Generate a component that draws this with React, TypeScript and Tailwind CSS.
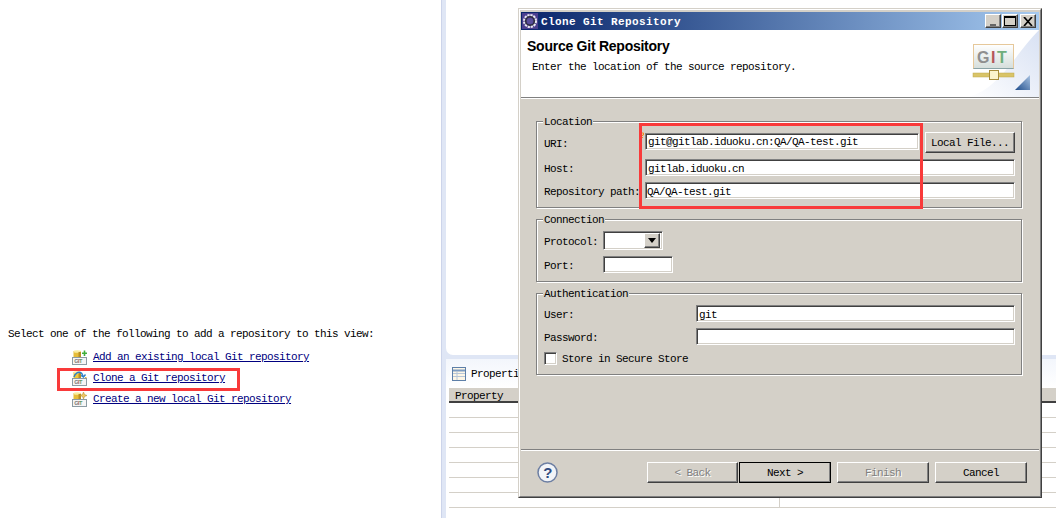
import type { ReactNode } from 'react';

const RAISED = 'border border-white border-r-[#404040] border-b-[#404040] shadow-[inset_-1px_-1px_0_#808080]';
const SUNKEN = 'border border-[#808080] border-r-white border-b-white shadow-[inset_1px_1px_0_#404040,inset_-1px_-1px_0_#d4d0c8]';

const LINKS: Array<{ variant: 'add' | 'clone' | 'create'; label: string }> = [
  { variant: 'add', label: 'Add an existing local Git repository' },
  { variant: 'clone', label: 'Clone a Git repository' },
  { variant: 'create', label: 'Create a new local Git repository' },
];

function GitIcon({ variant }: { variant: 'add' | 'clone' | 'create' }) {
  return (
    <svg width="15" height="15" viewBox="0 0 15 15" className="shrink-0">
      <rect x="1.5" y="1" width="7.5" height="6.5" fill={variant === 'clone' ? '#f0c93e' : '#e6bd3a'} />
      <ellipse cx="5.2" cy="1.5" rx="3.7" ry="1.3" fill="#f9eca0" />
      <rect x="6.5" y="2" width="2.5" height="5.5" fill="#b98f22" />
      {variant === 'add' && <path d="M10 2.5h1.7V.6h1.6v1.9H15v1.6h-1.7V6h-1.6V4.100H10z" fill="#3fae3a" />}
      {variant === 'clone' && (
        <path d="M2 6C3 2.500 6 .5 8.500 1.500 10 2 10.500 3.500 11 5M9 4.500l2.500 1.500L13.500 3.500" fill="none" stroke="#2f7fc4" strokeWidth="1.400" />
      )}
      {variant === 'clone' && <rect x="13" y="6" width="1.500" height="2" fill="#e0b83a" />}
      {variant === 'create' && <path d="M11.500 0l1 2.500L15 3.500l-2.500 1-1 2.500-1-2.500L8 3.500l2.500-1z" fill="#f0c860" stroke="#b8923a" strokeWidth=".6" />}
      <rect x=".5" y="7.500" width="14" height="7" fill="#f5f5f5" stroke="#8c9ba3" />
      <text x="2.300" y="13" fontSize="5.500" fontWeight="700" fontFamily="Liberation Sans">
        <tspan fill="#777">G</tspan>
        <tspan fill="#a86060">I</tspan>
        <tspan fill="#5d9a68">T</tspan>
      </text>
    </svg>
  );
}

function BannerArt() {
  return (
    <svg width="72" height="67" viewBox="0 0 72 67" className="shrink-0">
      <defs>
        <linearGradient id="sweep" x1="0" y1="1" x2="1" y2="0">
          <stop offset="0" stopColor="#ffffff" />
          <stop offset="1" stopColor="#d8e1f3" />
        </linearGradient>
        <linearGradient id="screen" x1="0" y1="0" x2="0" y2="1">
          <stop offset="0" stopColor="#ffffff" />
          <stop offset="1" stopColor="#d5dedb" />
        </linearGradient>
        <linearGradient id="wedge" x1="1" y1="0" x2="0" y2="1">
          <stop offset="0" stopColor="#a9c3e2" />
          <stop offset="1" stopColor="#1f4d8c" />
        </linearGradient>
      </defs>
      <path d="M0 67C32 60 48 24 72 0v67z" fill="url(#sweep)" />
      <rect x="6.500" y="14.500" width="40" height="24" fill="url(#screen)" stroke="#e6c89a" />
      <path d="M6.500 38.500h40" stroke="#8aa3a6" />
      <text x="10" y="32.500" fontSize="16" fontWeight="700" fontFamily="Liberation Sans" letterSpacing="1.500">
        <tspan fill="#8f8f8f">G</tspan>
        <tspan fill="#b5575b">I</tspan>
        <tspan fill="#6fae7c">T</tspan>
      </text>
      <rect x="6" y="43" width="41" height="4" fill="#d9c468" stroke="#bfa94e" strokeWidth=".5" />
      <rect x="22.500" y="40.500" width="9" height="9" fill="#fbf3cc" stroke="#a88d3c" />
      <path d="M63 45v15H48z" fill="url(#wedge)" />
    </svg>
  );
}

function GearIcon() {
  return (
    <svg width="16" height="16" viewBox="0 0 16 16" className="shrink-0">
      <rect width="16" height="16" fill="#4b3f8f" />
      <circle cx="8" cy="8" r="5.800" fill="none" stroke="#e8e8f0" strokeWidth="2.500" strokeDasharray="2.200 .8" />
      <circle cx="8" cy="8" r="4.300" fill="none" stroke="#2c2c3a" strokeWidth="1.500" />
      <circle cx="8" cy="8" r="3" fill="#5a4f9c" />
    </svg>
  );
}

function WindowButton({ children, className = '' }: { children: ReactNode; className?: string }) {
  return <div className={`flex h-[14px] w-[16px] items-center justify-center bg-[#d4d0c8] ${RAISED} ${className}`}>{children}</div>;
}

function TitleBar() {
  return (
    <div className="flex h-[18px] items-center bg-gradient-to-r from-[#0a246a] via-[#5577ad] to-[#a6caf0] pl-px pr-[3px]">
      <GearIcon />
      <span className="ml-[3px] pt-[2px] text-[11px] font-bold tracking-[0.4px] text-white">Clone Git Repository</span>
      <div className="ml-auto flex">
        <WindowButton><span className="mt-[7px] h-[2px] w-[6px] bg-[#666]" /></WindowButton>
        <WindowButton className="ml-px"><span className="h-[10px] w-[12px] border border-t-2 border-black" /></WindowButton>
        <WindowButton className="ml-[2px]">
          <svg width="10" height="9" viewBox="0 0 10 9"><path d="M1 0l8 9M9 0L1 9" stroke="#000" strokeWidth="1.700" /></svg>
        </WindowButton>
      </div>
    </div>
  );
}

function Group({ title, children, className = '' }: { title: string; children: ReactNode; className?: string }) {
  return (
    <fieldset className={`border border-[#808080] px-[7px] pr-[6px] shadow-[1px_1px_0_#fff,inset_1px_1px_0_#fff] [&_span]:pt-[2px] ${className}`}>
      <legend className="-ml-px h-[12px] bg-[#d4d0c8] px-px leading-[14px]">{title}</legend>
      {children}
    </fieldset>
  );
}

function Field({ value = '', className = '' }: { value?: string; className?: string }) {
  return <div className={`flex h-[17px] items-center bg-white pl-[2px] pt-[2px] ${SUNKEN} ${className}`}>{value}</div>;
}

function WizardButton({ label, disabled, primary, className = '' }: { label: string; disabled?: boolean; primary?: boolean; className?: string }) {
  return (
    <div
      className={`flex h-[21px] w-[92px] items-center justify-center bg-[#d4d0c8] ${RAISED} ${primary ? 'outline outline-1 -outline-offset-1 outline-black' : ''} ${disabled ? 'text-[#808080] [text-shadow:1px_1px_0_#fff]' : ''} ${className}`}
    >
      {label}
    </div>
  );
}

function Dialog() {
  return (
    <div className="absolute left-[518px] top-[8px] h-[490px] w-[524px] border border-[#d4d0c8] border-r-[#404040] border-b-[#404040] bg-[#d4d0c8]">
      <div className="flex h-full flex-col border border-white border-r-[#808080] border-b-[#808080] px-px pb-px pt-[2px]">
        <TitleBar />

        <div className="flex h-[67px] justify-between bg-white">
          <div className="pl-[6px] pt-[10px]">
            <h2 className="font-['Liberation_Sans',sans-serif] text-[14px] font-bold leading-[13px] tracking-[-0.25px]">Source Git Repository</h2>
            <p className="ml-[5px] mt-[8px]">Enter the location of the source repository.</p>
          </div>
          <BannerArt />
        </div>
        <div className="h-[2px] border-t border-[#808080] border-b border-b-white" />

        <div className="pl-[15px] pr-[17px] pt-[16px]">
          <Group title="Location">
            <div className="relative grid grid-cols-[101px_1fr] items-center gap-y-[6px] pb-[8px] pt-[5px]">
              <span>URI:</span>
              <div className="flex justify-between">
                <Field value="git@gitlab.iduoku.cn:QA/QA-test.git" className="mt-px w-[274px] !pt-0" />
                <div className={`flex h-[21px] w-[90px] items-center justify-center bg-[#d4d0c8] ${RAISED}`}>Local File...</div>
              </div>
              <span>Host:</span>
              <Field value="gitlab.iduoku.cn" />
              <span>Repository path:</span>
              <Field value="QA/QA-test.git" className="!pl-px" />
              <svg width="3" height="6" viewBox="0 0 3 6" className="absolute left-[97px] top-[5px]">
                <path d="M0 1h2.500v2H1.500v1M1 5.500h1" fill="none" stroke="#f08a1c" />
              </svg>
            </div>
          </Group>

          <Group title="Connection" className="mt-[5px]">
            <div className="grid grid-cols-[59px_1fr] items-center gap-y-[6px] pb-[8px] pt-[6px]">
              <span>Protocol:</span>
              <div className={`flex h-[19px] w-[60px] items-center justify-end bg-white pr-[2px] ${SUNKEN}`}>
                <div className={`flex h-[15px] w-[16px] items-center justify-center bg-[#d4d0c8] ${RAISED}`}>
                  <svg width="8" height="5" viewBox="0 0 8 5"><path d="M0 0h8L4 5z" fill="#000" /></svg>
                </div>
              </div>
              <span>Port:</span>
              <Field className="w-[70px]" />
            </div>
          </Group>

          <Group title="Authentication" className="mt-[5px]">
            <div className="grid grid-cols-[152px_1fr] items-center gap-y-[6px] pt-[6px]">
              <span>User:</span>
              <Field value="git" />
              <span>Password:</span>
              <Field />
            </div>
            <div className="mb-[9px] mt-[7px] flex items-center gap-[5px]">
              <div className={`h-[13px] w-[13px] bg-white ${SUNKEN}`} />
              <span className="!pt-0">Store in Secure Store</span>
            </div>
          </Group>
        </div>

        <div className="mt-auto h-[2px] border-t border-[#808080] border-b border-b-white" />
        <div className="flex h-[44px] items-start pl-[16px] pr-[12px] pt-[11px]">
          <svg width="21" height="21" viewBox="0 0 21 21" className="shrink-0">
            <circle cx="10.500" cy="10.500" r="9.500" fill="#f2f4f8" stroke="#6d7fa3" strokeWidth="1.500" />
            <text x="10.500" y="15.500" textAnchor="middle" fontSize="15" fontWeight="700" fontFamily="Liberation Sans" fill="#2f4a80">?</text>
          </svg>
          <WizardButton label="< Back" disabled className="ml-auto !w-[91px]" />
          <WizardButton label="Next >" primary className="ml-px" />
          <WizardButton label="Finish" disabled className="ml-[6px]" />
          <WizardButton label="Cancel" className="ml-[6px]" />
        </div>
      </div>
    </div>
  );
}

export default function App() {
  return (
    <div className="relative flex h-[518px] w-[1056px] overflow-hidden bg-white font-['Liberation_Mono',monospace] text-[11px] leading-[12px] tracking-[-0.6px] text-black">
      <div className="w-[441px] shrink-0 pl-[8px] pt-[328px]">
        <p>Select one of the following to add a repository to this view:</p>
        <ul className="ml-[64px] mt-[10px] flex flex-col gap-[6px]">
          {LINKS.map((link) => (
            <li key={link.variant} className="flex h-[15px] items-center gap-[6px]">
              <GitIcon variant={link.variant} />
              <a className="-mt-[1px] text-[#000080] underline underline-offset-1">{link.label}</a>
            </li>
          ))}
        </ul>
      </div>

      <div className="flex flex-1 flex-col border-l border-[#ccd4ea] bg-[#dfe6f5] pl-[4px]">
        <div className="h-[355px] rounded-bl-[7px] bg-white" />
        <div className="mt-[4px] flex flex-1 flex-col rounded-tl-[7px] bg-white">
          <div className="flex h-[29px] items-center gap-[5px] bg-gradient-to-b from-[#f3f6fc] to-white pl-[6px]">
            <svg width="14" height="14" viewBox="0 0 14 14">
              <rect x=".5" y=".5" width="13" height="13" fill="#fdf6e6" stroke="#5d7fa8" />
              <path d="M1 3.500h12" stroke="#7d9cc2" strokeWidth="2" />
              <path d="M1 6.500h12M1 9.500h12M5 4v9" stroke="#b7c6d8" />
            </svg>
            <span className="pt-px">Properties</span>
          </div>
          <div className="ml-[3px]">
            <div className="flex h-[15px] items-center border-b-2 border-[#404040] bg-[#d4d0c8] pl-[6px] pt-[2px]">Property</div>
            {[0, 1, 2, 3, 4, 5, 6].map((row) => (
              <div key={row} className="flex h-[15px] border-b border-[#d4d0c8]">
                <div className="w-[331px] border-r border-[#d4d0c8]" />
              </div>
            ))}
          </div>
        </div>
      </div>

      <Dialog />

      <div className="absolute left-[57px] top-[368px] h-[23px] w-[183px] border-[3px] border-[#f93a3a]" />
      <div className="absolute left-[639px] top-[123px] h-[86px] w-[284px] border-[3px] border-[#f93a3a]" />
    </div>
  );
}
